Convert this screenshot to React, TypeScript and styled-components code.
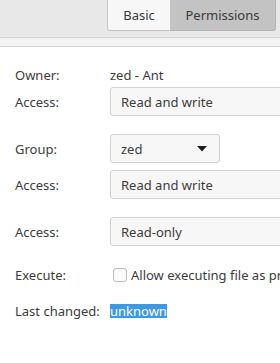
import React from "react";
import styled, { createGlobalStyle } from "styled-components";

const GlobalStyle = createGlobalStyle`
  html, body {
    margin: 0;
    padding: 0;
    background: #ffffff;
    overflow: hidden;
  }
  body {
    font-family: "Noto Sans", "Open Sans", sans-serif;
    font-size: 13px;
    color: #3c3c3c;
  }
`;

const rows = [
  { label: "Owner:", kind: "text", value: "zed - Ant", top: 19 },
  { label: "Access:", kind: "field", value: "Read and write", top: 3 },
  { label: "Group:", kind: "select", value: "zed", top: 18 },
  { label: "Access:", kind: "field", value: "Read and write", top: 7 },
  { label: "Access:", kind: "field", value: "Read-only", top: 18 },
  { label: "Execute:", kind: "check", value: "Allow executing file as program", top: 20 },
  { label: "Last changed:", kind: "selected", value: "unknown", top: 18 },
];

const App = () => {
  return (
    <Window>
      <GlobalStyle />
      <Header>
        <TabBar>
          <Tab>Basic</Tab>
          <Tab $active>Permissions</Tab>
        </TabBar>
      </Header>
      <Strip />
      <Form>
        {rows.map((row, index) => (
          <Row key={index} $top={row.top} $tall={row.kind === "field" || row.kind === "select"}>
            <Label>{row.label}</Label>
            {row.kind === "text" && <Value>{row.value}</Value>}
            {row.kind === "field" && <Field>{row.value}</Field>}
            {row.kind === "select" && (
              <Select>
                {row.value}
                <svg width="10" height="6" viewBox="0 0 10 6">
                  <path d="M0 0 L10 0 L5 5.5 Z" fill="#1e1e1e" />
                </svg>
              </Select>
            )}
            {row.kind === "check" && (
              <Check>
                <Box />
                {row.value}
              </Check>
            )}
            {row.kind === "selected" && <Selected>{row.value}</Selected>}
          </Row>
        ))}
      </Form>
    </Window>
  );
};

export default App;

const Window = styled.div`
  width: 280px;
  height: 363px;
  display: flex;
  flex-direction: column;
  background: #ffffff;
`;

const Header = styled.div`
  height: 37px;
  background: #e8e8e8;
  border-bottom: 1px solid #d6d6d6;
  display: flex;
  justify-content: flex-end;
  padding-right: 4px;
`;

const TabBar = styled.div`
  display: flex;
  height: 31px;
`;

const Tab = styled.div<{ $active?: boolean }>`
  display: flex;
  align-items: center;
  justify-content: center;
  height: 31px;
  box-sizing: border-box;
  padding-bottom: 1px;
  width: ${(p) => (p.$active ? "106px" : "63px")};
  background: ${(p) => (p.$active ? "#c3c3c3" : "#f7f7f7")};
  border-bottom: 1px solid ${(p) => (p.$active ? "#b3b3b3" : "#c2c2c2")};
  border-left: ${(p) => (p.$active ? "none" : "1px solid #c6c6c6")};
  border-right: ${(p) => (p.$active ? "1px solid #b3b3b3" : "none")};
  border-radius: ${(p) => (p.$active ? "0 0 3px 0" : "0 0 0 3px")};
  color: #3a3a3a;
`;

const Strip = styled.div`
  height: 8px;
  background: #f2f2f2;
  border-bottom: 1px solid #d8d8d8;
`;

const Form = styled.div`
  display: flex;
  flex-direction: column;
`;

const Row = styled.div<{ $top: number; $tall: boolean }>`
  display: grid;
  grid-template-columns: 95px 1fr;
  align-items: center;
  margin-top: ${(p) => p.$top}px;
  height: ${(p) => (p.$tall ? "29px" : "18px")};
  padding-left: 15px;
  white-space: nowrap;
`;

const Label = styled.span`
  color: #3c3c3c;
`;

const Value = styled.span`
  color: #3c3c3c;
`;

const Field = styled.div`
  height: 29px;
  box-sizing: border-box;
  display: flex;
  align-items: center;
  padding: 0 10px;
  width: 200px;
  background: #f7f7f7;
  border: 1px solid #d2d2d2;
  border-radius: 3px;
`;

const Select = styled(Field)`
  width: 110px;
  justify-content: space-between;
  padding-right: 12px;
`;

const Check = styled.div`
  display: flex;
  align-items: center;
  gap: 4px;
  margin-left: 3px;
`;

const Box = styled.span`
  width: 14px;
  height: 14px;
  box-sizing: border-box;
  border: 1px solid #bdbdbd;
  border-radius: 3px;
  background: #fbfbfb;
`;

const Selected = styled.span`
  justify-self: start;
  background: #3d99e0;
  color: #ffffff;
  line-height: 14px;
  height: 14px;
`;
